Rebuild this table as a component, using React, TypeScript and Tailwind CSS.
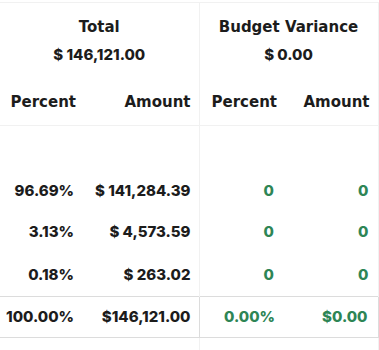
const rows = [
  { pct: '96.69%', amt: '$ 141,284.39', h: 'h-[41px]' },
  { pct: '3.13%', amt: '$ 4,573.59', h: 'h-[42px]' },
  { pct: '0.18%', amt: '$ 263.02', h: 'h-[43px]' },
];

const label = { fontFamily: '"DejaVu Sans", Inter, sans-serif' };

const App: React.FC = () => {
  return (
    <div className="w-[379px] h-[350px] bg-white overflow-hidden pt-[2px]" style={{ fontFamily: 'Inter, "Noto Sans", sans-serif' }}>
      <table className="w-[378px] border-collapse table-fixed text-[#1c1c1c]">
        <colgroup>
          <col className="w-[82px]" />
          <col className="w-[117px]" />
          <col className="w-[84px]" />
          <col className="w-[95px]" />
        </colgroup>
        <thead>
          {/* group titles */}
          <tr className="border-t border-[#f1f1f1]">
            <th colSpan={2} className="h-[76px] border-r border-[#f1f1f1] text-center align-middle">
              <div className="leading-[27px] font-bold text-[15px]" style={label}>Total</div>
              <div className="leading-[27px] font-extrabold text-[15px]">$ 146,121.00</div>
            </th>
            <th colSpan={2} className="h-[76px] border-r border-[#f1f1f1] text-center align-middle">
              <div className="leading-[27px] font-bold text-[15px]" style={label}>Budget Variance</div>
              <div className="leading-[27px] font-extrabold text-[15px]">$ 0.00</div>
            </th>
          </tr>
          <tr className="border-b border-[#f1f1f1] text-[15px] font-bold" style={label}>
            <th className="h-[47px] pr-[6px] text-right">Percent</th>
            <th className="h-[47px] pr-[8px] text-right border-r border-[#f1f1f1]">Amount</th>
            <th className="h-[47px] pr-[6px] text-right">Percent</th>
            <th className="h-[47px] pr-[8px] text-right border-r border-[#f1f1f1]">Amount</th>
          </tr>
        </thead>
        <tbody className="font-extrabold text-[15px]">
          <tr>
            <td colSpan={2} className="h-[45px] border-r border-[#f1f1f1]"></td>
            <td colSpan={2} className="h-[45px] border-r border-[#f1f1f1]"></td>
          </tr>
          {rows.map((r) => (
            <tr key={r.pct} className={r.h}>
              <td className="pr-[8px] text-right">{r.pct}</td>
              <td className="pr-[8px] text-right border-r border-[#f1f1f1]">{r.amt}</td>
              <td className="pr-[9px] text-right text-[#2e8555]">0</td>
              <td className="pr-[9px] text-right text-[#2e8555] border-r border-[#f1f1f1]">0</td>
            </tr>
          ))}
          <tr className="border-y border-[#dcdcdc]">
            <td className="h-[41px] pr-[8px] text-right">100.00%</td>
            <td className="h-[41px] pr-[8px] text-right border-r border-[#dcdcdc]">$146,121.00</td>
            <td className="h-[41px] pr-[8px] text-right text-[#2e8555]">0.00%</td>
            <td className="h-[41px] pr-[10px] text-right text-[#2e8555] border-r border-[#dcdcdc]">$0.00</td>
          </tr>
          <tr>
            <td colSpan={2} className="h-[20px] border-r border-[#f1f1f1]"></td>
            <td colSpan={2} className="h-[20px] border-r border-[#f1f1f1]"></td>
          </tr>
        </tbody>
      </table>
    </div>
  );
};

export default App;
